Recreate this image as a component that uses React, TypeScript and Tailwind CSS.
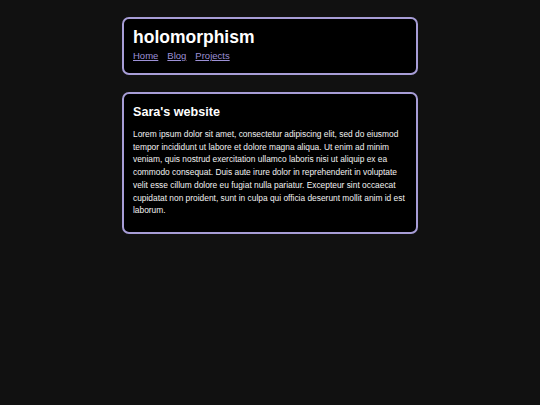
export default function App() {
  return (
    <div className="min-h-[405px] bg-[#111111] pt-[17px] font-['Liberation_Sans',Arial,sans-serif] text-white">
      <div className="mx-auto flex w-[296px] flex-col gap-[17px]">
        <header className="rounded-[7px] border-2 border-[#a79dd6] bg-black px-[9px] pb-[11px] pt-[5px]">
          <h1 className="text-[17.5px] font-bold leading-[26px]">holomorphism</h1>
          <nav className="flex gap-[9px] text-[9.5px] leading-[12px] text-[#9d91d6]">
            <a href="#" className="underline">Home</a>
            <a href="#" className="underline">Blog</a>
            <a href="#" className="underline">Projects</a>
          </nav>
        </header>
        <main className="rounded-[7px] border-2 border-[#a79dd6] bg-black px-[9px] pb-[15px] pt-[8px]">
          <h2 className="text-[12.6px] font-bold leading-[20px]">Sara's website</h2>
          <p className="mt-[6px] text-[8.4px] leading-[12.7px] text-[#f2f2f2]">
            Lorem ipsum dolor sit amet, consectetur adipiscing elit, sed do eiusmod tempor incididunt ut
            labore et dolore magna aliqua. Ut enim ad minim veniam, quis nostrud exercitation ullamco
            laboris nisi ut aliquip ex ea commodo consequat. Duis aute irure dolor in reprehenderit in
            voluptate velit esse cillum dolore eu fugiat nulla pariatur. Excepteur sint occaecat
            cupidatat non proident, sunt in culpa qui officia deserunt mollit anim id est laborum.
          </p>
        </main>
      </div>
    </div>
  );
}
